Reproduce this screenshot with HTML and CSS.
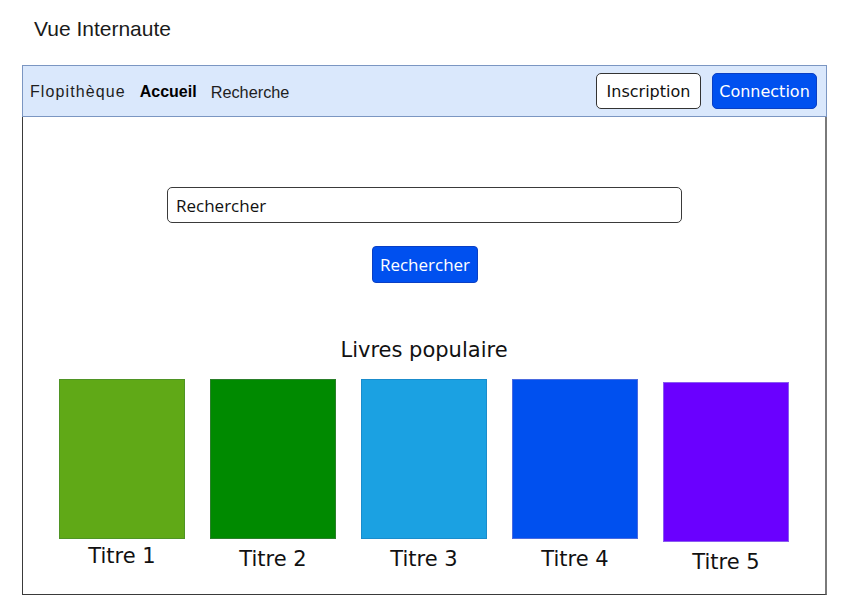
FILE: index.html
```html
<!DOCTYPE html>
<html lang="fr">
<head>
<meta charset="utf-8">
<title>Vue Internaute</title>
<link rel="stylesheet" href="styles.css">
</head>
<body>
<h1 class="page-title">Vue Internaute</h1>
<div class="frame">
  <nav class="nav">
    <div class="nav-links">
      <span class="brand">Flopithèque</span>
      <span class="link active">Accueil</span>
      <span class="link">Recherche</span>
    </div>
    <div class="nav-actions">
      <span class="btn btn-outline">Inscription</span>
      <span class="btn btn-primary">Connection</span>
    </div>
  </nav>
  <main class="content">
    <div class="search-input">Rechercher</div>
    <div class="search-btn">Rechercher</div>
    <h2 class="section-title">Livres populaire</h2>
    <div class="books">
      <div class="book">
        <div class="cover c1"></div>
        <div class="book-title t1">Titre 1</div>
      </div>
      <div class="book">
        <div class="cover c2"></div>
        <div class="book-title">Titre 2</div>
      </div>
      <div class="book">
        <div class="cover c3"></div>
        <div class="book-title">Titre 3</div>
      </div>
      <div class="book">
        <div class="cover c4"></div>
        <div class="book-title">Titre 4</div>
      </div>
      <div class="book shifted">
        <div class="cover c5"></div>
        <div class="book-title">Titre 5</div>
      </div>
    </div>
  </main>
</div>
</body>
</html>
```

FILE: styles.css
```css
* { box-sizing: border-box; }

html, body {
  margin: 0;
  padding: 0;
  background: #ffffff;
}

body {
  font-family: "Liberation Sans", Arial, sans-serif;
  color: #111;
}

.page-title {
  margin: 0;
  padding: 17px 0 0 34px;
  font-family: "Liberation Sans", Arial, sans-serif;
  font-weight: normal;
  font-size: 21px;
  line-height: 24px;
  color: #1a1a1a;
}

.frame {
  margin: 24px 0 0 22px;
  width: 805px;
}

.nav {
  height: 52px;
  border: 1px solid #7b96c2;
  background: #dae8fc;
  display: flex;
  align-items: center;
  justify-content: space-between;
  padding: 0 9px 0 7px;
}

.nav-links {
  display: flex;
  align-items: center;
  margin-top: 2px;
  font-family: "Liberation Sans", Arial, sans-serif;
  font-size: 16px;
  color: #1e1e1e;
}

.brand { margin-right: 14px; letter-spacing: 1.1px; }
.link { margin-right: 14px; font-size: 16.3px; }
.link.active { font-weight: bold; color: #000; font-size: 16px; }

.nav-actions {
  display: flex;
  gap: 11px;
}

.btn {
  display: flex;
  align-items: center;
  justify-content: center;
  width: 105px;
  height: 36px;
  border-radius: 5px;
  font-family: "DejaVu Sans", Verdana, sans-serif;
  font-size: 16px;
}

.btn-outline {
  background: #fff;
  border: 1px solid #333;
  color: #111;
}

.btn-primary {
  background: #0050ef;
  border: 1px solid #0a3fc4;
  color: #fff;
}

.content {
  height: 478px;
  border: 1px solid #3a3a3a;
  border-top: none;
  border-right: 2px solid #7a7a7a;
  display: flex;
  flex-direction: column;
  align-items: center;
  padding-top: 70px;
}

.search-input {
  width: 515px;
  height: 36px;
  border: 1px solid #3a3a3a;
  border-radius: 5px;
  display: flex;
  align-items: center;
  padding-left: 8px;
  font-family: "Open Sans", sans-serif;
  font-size: 17px;
  color: #111;
  margin-left: 1px;
}

.search-btn {
  margin-top: 23px;
  width: 106px;
  height: 37px;
  border-radius: 4px;
  background: #0050ef;
  border: 1px solid #0a3fc4;
  color: #fff;
  display: flex;
  align-items: center;
  justify-content: center;
  font-family: "Open Sans", sans-serif;
  font-size: 17px;
  margin-left: 2px;
}

.section-title {
  margin: 55px 0 0 0;
  font-family: "DejaVu Sans", Verdana, sans-serif;
  font-weight: normal;
  font-size: 21px;
  line-height: 25px;
  color: #111;
}

.books {
  display: flex;
  gap: 25px;
  margin-top: 16px;
}

.book {
  width: 126px;
  display: flex;
  flex-direction: column;
  align-items: center;
}

.book.shifted { margin-top: 3px; }

.cover {
  width: 126px;
  height: 160px;
  border: 1px solid;
}

.c1 { background: #60a917; border-color: #4f9424; }
.c2 { background: #008a00; border-color: #2a7f2a; }
.c3 { background: #1ba1e2; border-color: #1a8ccc; }
.c4 { background: #0050ef; border-color: #4a6ae0; }
.c5 { background: #6a00ff; border-color: #8a5cf0; }

.book-title {
  margin-top: 8px;
  font-family: "DejaVu Sans", Verdana, sans-serif;
  font-size: 21px;
  line-height: 25px;
  color: #111;
}

.book-title.t1 { margin-top: 5px; }
```
